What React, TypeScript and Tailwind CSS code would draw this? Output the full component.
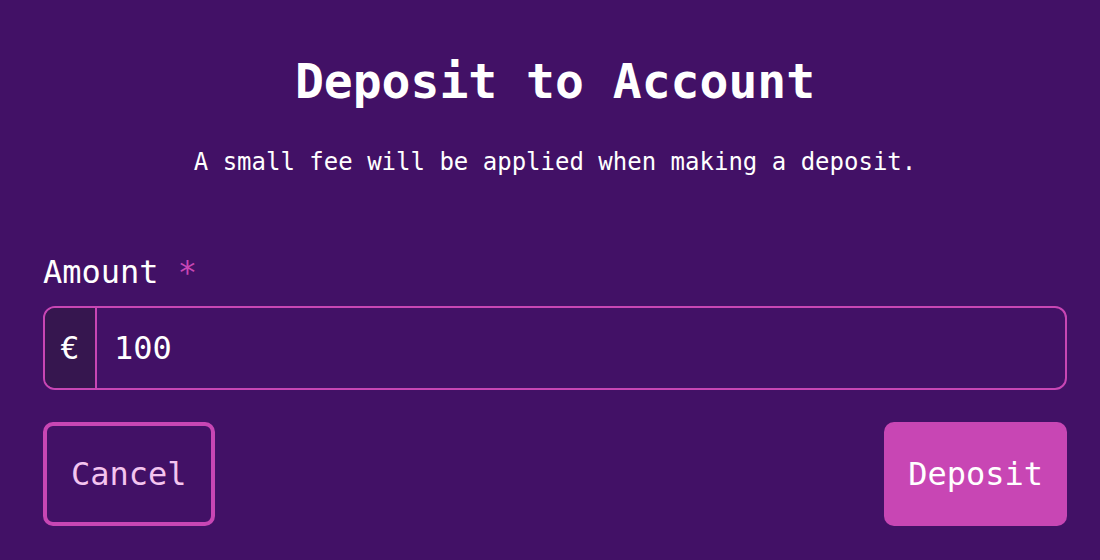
import React from "react";

export default function App() {
  return (
    <div
      className="w-[1100px] h-[560px] bg-[#421166] text-white overflow-hidden"
      style={{ fontFamily: '"DejaVu Sans Mono", monospace' }}
    >
      <div className="ml-[43px] w-[1024px] pt-[49px] flex flex-col">
        <h1 className="text-center font-bold text-[48px] leading-[64px]">Deposit to Account</h1>
        <p className="text-center text-[24px] leading-[32px] mt-[33px]">
          A small fee will be applied when making a deposit.
        </p>
        <label className="mt-[70px] text-[32px] leading-[48px]">
          Amount <span className="text-[#c846b4]">*</span>
        </label>
        <div className="mt-[10px] h-[84px] flex rounded-[12px] border-2 border-[#c846b4] overflow-hidden">
          <div className="w-[52px] bg-[#36164f] border-r-2 border-[#c846b4] flex items-center justify-center text-[32px]">
            €
          </div>
          <div className="flex-1 flex items-center pl-[17px] text-[32px]">100</div>
        </div>
        <div className="mt-[32px] flex justify-between">
          <button className="h-[104px] px-[24px] border-4 border-[#c846b4] rounded-[10px] text-[32px] text-[#f4c4ef]">
            Cancel
          </button>
          <button className="h-[104px] px-[24px] bg-[#c846b4] rounded-[10px] text-[32px] text-white">
            Deposit
          </button>
        </div>
      </div>
    </div>
  );
}
